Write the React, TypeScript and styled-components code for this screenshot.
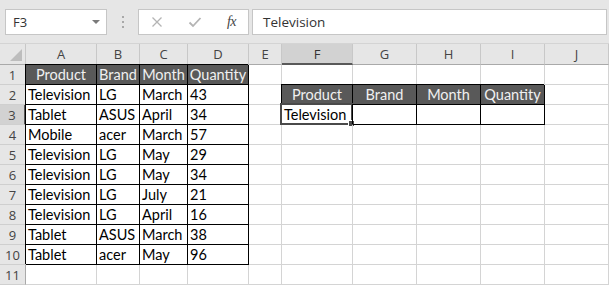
import React from "react";
import styled, { createGlobalStyle, css } from "styled-components";

const Global = createGlobalStyle`
  html, body { margin: 0; padding: 0; background: #ffffff; overflow: hidden; }
  body { font-family: "Open Sans", "Noto Sans", sans-serif; }
`;

const Page = styled.div`
  width: 609px;
  height: 285px;
  display: flex;
  flex-direction: column;
  background: #fff;
`;

const Toolbar = styled.div`
  height: 44px;
  flex: none;
  display: flex;
  align-items: flex-start;
  padding: 9px 2px 0 5px;
  box-sizing: border-box;
  background: #e6e6e6;
  border-bottom: 1px solid #d4d4d4;
`;

const Box = styled.div<{ $w?: number }>`
  height: 26px;
  box-sizing: border-box;
  background: #fff;
  border: 1px solid #c6c6c6;
  display: flex;
  align-items: center;
  ${(p) => (p.$w ? css`width: ${p.$w}px; flex: none;` : css`flex: 1;`)}
`;

const NameBox = styled(Box)`
  padding: 0 6px 0 7px;
  justify-content: space-between;
  font-size: 13px;
  color: #333;
`;

const Caret = styled.span`
  width: 0;
  height: 0;
  border-left: 4px solid transparent;
  border-right: 4px solid transparent;
  border-top: 4px solid #7a7a7a;
`;

const Grip = styled.div`
  width: 31px;
  height: 26px;
  flex: none;
  display: flex;
  flex-direction: column;
  align-items: center;
  justify-content: center;
  gap: 3px;
`;

const Dot = styled.span`
  width: 2px;
  height: 2px;
  background: #a8a8a8;
`;

const FxBox = styled(Box)`
  justify-content: space-between;
  padding: 0 12px 0 12px;
  margin-right: 3px;
`;

const FxLabel = styled.span`
  font-family: "Liberation Serif", serif;
  font-style: italic;
  font-size: 14px;
  color: #444;
  letter-spacing: -0.5px;
`;

const FormulaBox = styled(Box)`
  padding-left: 10px;
  font-size: 13.5px;
  color: #333;
`;

const Sheet = styled.div`
  display: grid;
  grid-template-columns: 26px 71px 43px 48px 61px 33px 71px 64px 64px 64px 64px;
  grid-template-rows: 21px repeat(11, 20px);
`;

const ColHead = styled.div<{ $active?: boolean; $corner?: boolean }>`
  box-sizing: border-box;
  background: ${(p) => (p.$active ? "#d2d2d2" : "#e6e6e6")};
  border-right: 1px solid #c8c8c8;
  border-bottom: ${(p) => (p.$active ? "2px solid #595959" : "1px solid #a9a9a9")};
  display: flex;
  align-items: center;
  justify-content: center;
  font-size: 13px;
  color: ${(p) => (p.$active ? "#333" : "#444")};
  position: relative;
  ${(p) =>
    p.$corner &&
    css`
      border-bottom: 1px solid #a9a9a9;
    `}
`;

const CornerTri = styled.span`
  position: absolute;
  right: 3px;
  bottom: 3px;
  width: 0;
  height: 0;
  border-left: 12px solid transparent;
  border-bottom: 12px solid #bdbdbd;
`;

const RowHead = styled.div<{ $active?: boolean }>`
  box-sizing: border-box;
  background: ${(p) => (p.$active ? "#d2d2d2" : "#e6e6e6")};
  border-bottom: 1px solid #cfcfcf;
  border-right: ${(p) => (p.$active ? "2px solid #595959" : "1px solid #a9a9a9")};
  display: flex;
  align-items: center;
  justify-content: center;
  font-size: 13px;
  color: #444;
`;

type Variant = "plain" | "head" | "data";

const Cell = styled.div<{ $variant: Variant }>`
  box-sizing: border-box;
  position: relative;
  display: flex;
  align-items: flex-end;
  padding: 0 2px 1px 2px;
  font-family: "Lato", "Liberation Sans", sans-serif;
  font-size: 14.5px;
  white-space: nowrap;
  color: #000;
  border-right: 1px solid #d4d4d4;
  border-bottom: 1px solid #d4d4d4;
  ${(p) =>
    p.$variant !== "plain" &&
    css`
      border-right-color: #000;
      border-bottom-color: #000;
      box-shadow: -1px -1px 0 0 #000;
    `}
  ${(p) =>
    p.$variant === "head" &&
    css`
      background: #595959;
      color: #f0f0f0;
      justify-content: center;
    `}
`;

const Selection = styled.span`
  position: absolute;
  left: -2px;
  top: -2px;
  right: -1px;
  bottom: -1px;
  border: 2px solid #4a4a4a;
  pointer-events: none;
  &::after {
    content: "";
    position: absolute;
    right: -4px;
    bottom: -4px;
    width: 5px;
    height: 5px;
    background: #4a4a4a;
    border: 1px solid #fff;
  }
`;

const columns = ["A", "B", "C", "D", "E", "F", "G", "H", "I", "J"];
const ACTIVE_COL = 5;
const ACTIVE_ROW = 3;

const table1: string[][] = [
  ["Product", "Brand", "Month", "Quantity"],
  ["Television", "LG", "March", "43"],
  ["Tablet", "ASUS", "April", "34"],
  ["Mobile", "acer", "March", "57"],
  ["Television", "LG", "May", "29"],
  ["Television", "LG", "May", "34"],
  ["Television", "LG", "July", "21"],
  ["Television", "LG", "April", "16"],
  ["Tablet", "ASUS", "March", "38"],
  ["Tablet", "acer", "May", "96"],
];

const table2: string[][] = [
  ["Product", "Brand", "Month", "Quantity"],
  ["Television", "", "", ""],
];

function cellAt(row: number, col: number): { text: string; variant: Variant } {
  if (row >= 1 && row <= 10 && col <= 3) {
    return { text: table1[row - 1][col], variant: row === 1 ? "head" : "data" };
  }
  if (row >= 2 && row <= 3 && col >= 5 && col <= 8) {
    return { text: table2[row - 2][col - 5], variant: row === 2 ? "head" : "data" };
  }
  return { text: "", variant: "plain" };
}

const XIcon = () => (
  <svg width="12" height="12" viewBox="0 0 12 12">
    <path d="M1.5 1.5 L10.5 10.5 M10.5 1.5 L1.5 10.5" stroke="#b4b4b4" strokeWidth="1.3" fill="none" />
  </svg>
);

const CheckIcon = () => (
  <svg width="14" height="12" viewBox="0 0 14 12">
    <path d="M1.5 6.5 L5 10 L12.5 2" stroke="#b4b4b4" strokeWidth="1.8" fill="none" />
  </svg>
);

export default function App() {
  const rows = Array.from({ length: 11 }, (_, i) => i + 1);
  return (
    <Page>
      <Global />
      <Toolbar>
        <NameBox $w={102}>
          <span>F3</span>
          <Caret />
        </NameBox>
        <Grip>
          <Dot />
          <Dot />
          <Dot />
        </Grip>
        <FxBox $w={111}>
          <XIcon />
          <CheckIcon />
          <FxLabel>fx</FxLabel>
        </FxBox>
        <FormulaBox>Television</FormulaBox>
      </Toolbar>
      <Sheet>
        <ColHead $corner>
          <CornerTri />
        </ColHead>
        {columns.map((c, i) => (
          <ColHead key={c} $active={i === ACTIVE_COL}>
            {c}
          </ColHead>
        ))}
        {rows.map((r) => (
          <React.Fragment key={r}>
            <RowHead $active={r === ACTIVE_ROW}>{r}</RowHead>
            {columns.map((c, ci) => {
              const cell = cellAt(r, ci);
              return (
                <Cell key={c + r} $variant={cell.variant}>
                  {cell.text}
                  {r === ACTIVE_ROW && ci === ACTIVE_COL && <Selection />}
                </Cell>
              );
            })}
          </React.Fragment>
        ))}
      </Sheet>
    </Page>
  );
}
